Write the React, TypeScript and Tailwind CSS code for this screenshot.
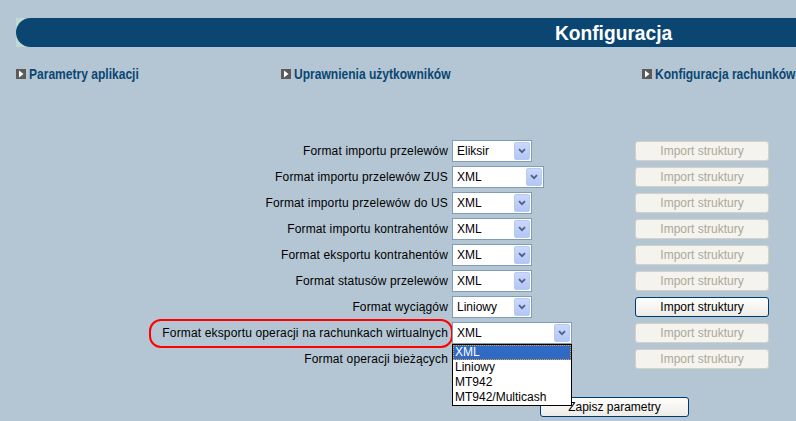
import { useState } from 'react';

interface Row {
  label: string;
  value: string;
  width: string;
  enabled?: boolean;
}

const rows: Row[] = [
  { label: 'Format importu przelewów', value: 'Eliksir', width: 'w-[80px]' },
  { label: 'Format importu przelewów ZUS', value: 'XML', width: 'w-[92px]' },
  { label: 'Format importu przelewów do US', value: 'XML', width: 'w-[80px]' },
  { label: 'Format importu kontrahentów', value: 'XML', width: 'w-[80px]' },
  { label: 'Format eksportu kontrahentów', value: 'XML', width: 'w-[80px]' },
  { label: 'Format statusów przelewów', value: 'XML', width: 'w-[80px]' },
  { label: 'Format wyciągów', value: 'Liniowy', width: 'w-[80px]', enabled: true },
  { label: 'Format eksportu operacji na rachunkach wirtualnych', value: 'XML', width: 'w-[120px]' },
  { label: 'Format operacji bieżących', value: 'XML', width: 'w-[80px]' },
];

const options = ['XML', 'Liniowy', 'MT942', 'MT942/Multicash'];

const NavLink = ({ text }: { text: string }) => (
  <a className="flex items-center gap-[3px] cursor-pointer whitespace-nowrap">
    <span className="w-[10px] h-[10px] bg-[#5b5b5b] flex items-center justify-center shrink-0">
      <svg width="6" height="8" viewBox="0 0 6 8">
        <path d="M1 0.5 L5.5 4 L1 7.5 Z" fill="#ffffff" />
      </svg>
    </span>
    <span className="inline-block origin-left scale-x-[0.86] text-[#0b4672] font-bold text-[14px] leading-none">{text}</span>
  </a>
);

const SelectBox = ({ value, width }: { value: string; width: string }) => (
  <div className={`${width} h-[22px] bg-white border border-[#7f9db9] flex items-center justify-between`}>
    <span className="pl-[4px] text-[12px] text-black leading-none">{value}</span>
    <span className="w-[16px] h-[18px] mr-[1px] rounded-[2px] border border-[#b9c9ef] bg-gradient-to-b from-[#cbd8fc] to-[#b3c6f6] flex items-center justify-center">
      <svg width="8" height="6" viewBox="0 0 8 6">
        <path d="M1 1.2 L4 4.2 L7 1.2" stroke="#4d6185" strokeWidth="1.8" fill="none" />
      </svg>
    </span>
  </div>
);

const Button = ({ text, enabled, width }: { text: string; enabled?: boolean; width: string }) =>
  enabled ? (
    <button className={`${width} h-[20px] rounded-[3px] border border-[#003c74] bg-gradient-to-b from-white to-[#ecebe6] text-[12px] text-black leading-none`}>
      {text}
    </button>
  ) : (
    <button disabled className={`${width} h-[20px] rounded-[3px] border border-[#d4d2c5] bg-[#f4f3ee] text-[12px] text-[#aca899] leading-none`}>
      {text}
    </button>
  );

export default function App() {
  const [open] = useState(true);

  return (
    <div className="w-[796px] h-[421px] bg-[#b4c6d4] overflow-hidden" style={{ fontFamily: '"Liberation Sans", Arial, sans-serif' }}>
      <div className="pt-[18px] pl-[16px]">
        <div className="bg-[#c2d8d2]">
          <div className="h-[29px] bg-[#0b4672] rounded-l-full flex items-center justify-end pr-[124px]">
            <span className="inline-block origin-right scale-x-[0.96] text-white font-bold text-[20px] leading-none">
              Konfiguracja
            </span>
          </div>
        </div>
      </div>

      <div className="mt-[19px] h-[16px] pl-[16px] flex items-center">
        <div className="w-[265px] shrink-0"><NavLink text="Parametry aplikacji" /></div>
        <div className="w-[361px] shrink-0"><NavLink text="Uprawnienia użytkowników" /></div>
        <div className="shrink-0"><NavLink text="Konfiguracja rachunków" /></div>
      </div>

      <div className="mt-[56px]">
        {rows.map((r, i) => (
          <div key={i} className="relative h-[26px] flex items-center">
            {i === 7 && (
              <div className="absolute left-[149px] top-[-1px] w-[304px] h-[29px] border-2 border-[#ff0000] rounded-[12px]" />
            )}
            <div className="w-[448px] text-right text-[12px] tracking-[0.15px] text-black">{r.label}</div>
            <div className="ml-[4px] w-[183px] relative">
              <SelectBox value={r.value} width={r.width} />
              {i === 7 && open && (
                <div className="absolute z-10 left-0 top-[22px] w-[120px] bg-white border border-black text-[12px] leading-[13px] text-black">
                  {options.map((o, j) => (
                    <div
                      key={o}
                      className={
                        j === 0
                          ? 'h-[15px] pl-[1px] flex items-center bg-[#316ac5] text-white border border-dotted border-[#e8a33a]'
                          : 'h-[15px] pl-[2px] flex items-center'
                      }
                    >
                      {o}
                    </div>
                  ))}
                </div>
              )}
            </div>
            <Button text="Import struktury" enabled={r.enabled} width="w-[134px]" />
          </div>
        ))}
      </div>

      <div className="mt-[25px] pl-[540px] flex">
        <Button text="Zapisz parametry" enabled width="w-[149px]" />
      </div>
    </div>
  );
}
